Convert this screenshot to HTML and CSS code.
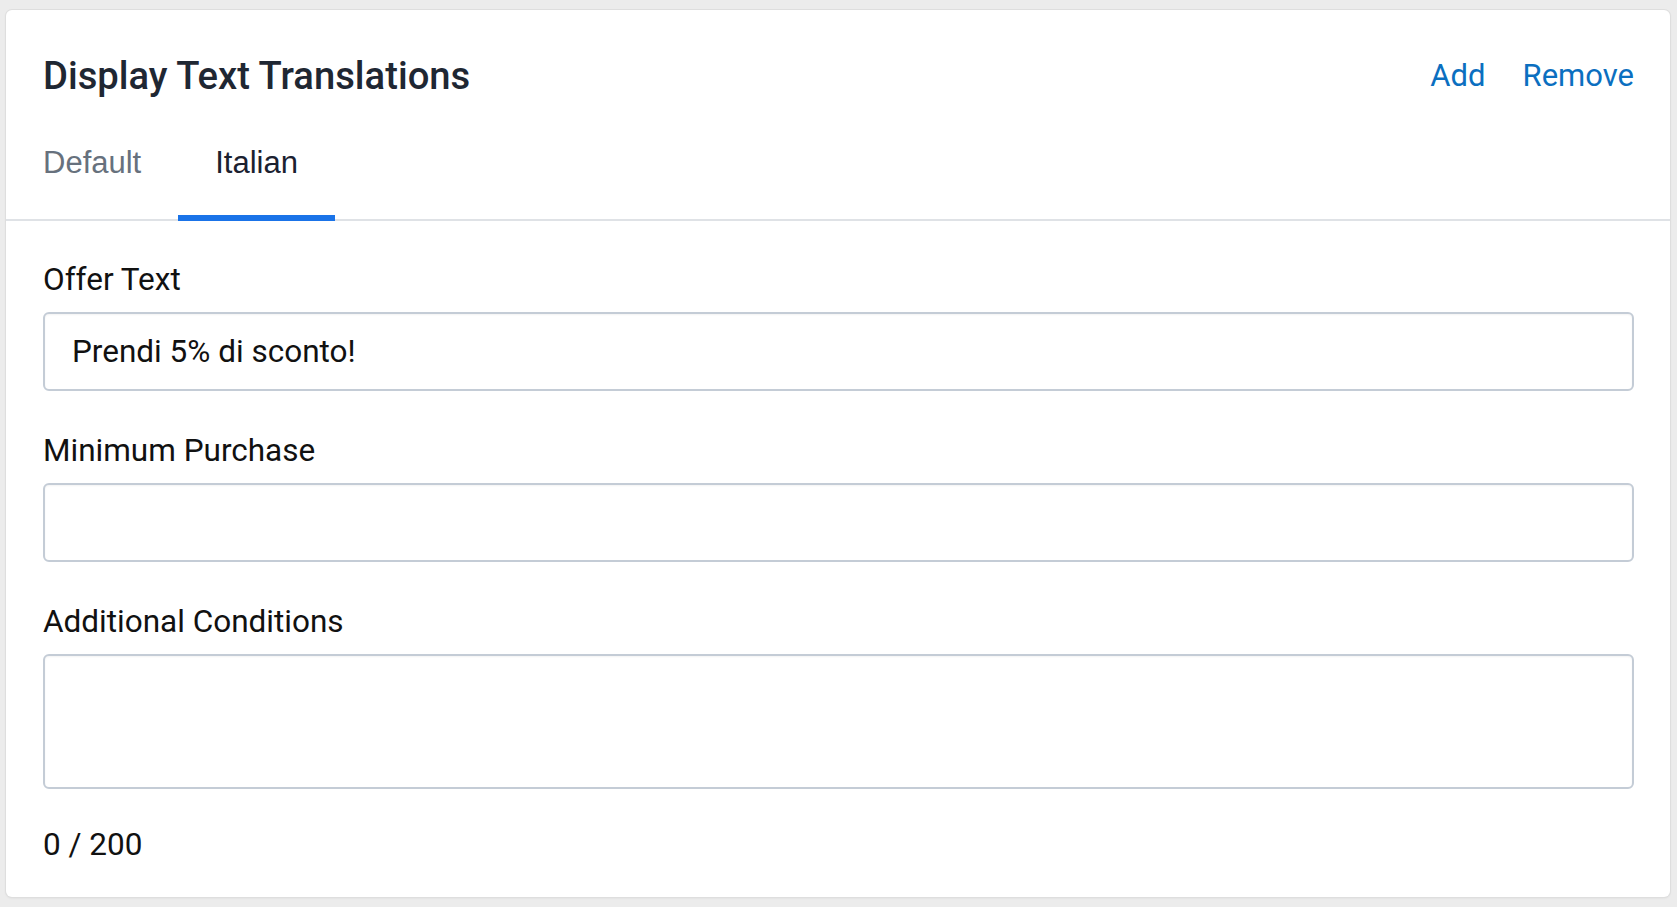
FILE: index.html
```html
<!DOCTYPE html>
<html lang="en">
<head>
<meta charset="utf-8">
<title>Display Text Translations</title>
<link rel="stylesheet" href="styles.css">
</head>
<body>
  <section class="card">
    <header class="card-header">
      <h1 class="card-title">Display Text Translations</h1>
      <div class="actions">
        <a class="action-link" href="#">Add</a>
        <a class="action-link" href="#">Remove</a>
      </div>
    </header>
    <nav class="tabs">
      <div class="tab">Default</div>
      <div class="tab tab-active">Italian</div>
    </nav>
    <div class="card-body">
      <div class="field">
        <label class="field-label">Offer Text</label>
        <div class="text-input">Prendi 5% di sconto!</div>
      </div>
      <div class="field">
        <label class="field-label">Minimum Purchase</label>
        <div class="text-input"></div>
      </div>
      <div class="field field-last">
        <label class="field-label">Additional Conditions</label>
        <div class="text-area"></div>
      </div>
      <div class="counter">0 / 200</div>
    </div>
  </section>
</body>
</html>
```
FILE: styles.css
```css
* {
  box-sizing: border-box;
}

html, body {
  margin: 0;
  height: 100%;
}

body {
  background: #ececec;
  padding: 10px 7px 10px 6px;
  font-family: Roboto, "Liberation Sans", sans-serif;
}

.card {
  background: #ffffff;
  border-radius: 6px;
  box-shadow: 0 0 0 1px #dedede, 0 1px 3px rgba(0, 0, 0, 0.08);
  height: 887px;
}

.card-header {
  display: flex;
  justify-content: space-between;
  align-items: center;
  padding: 43px 36px 0 37px;
}

.card-title {
  margin: 0;
  font-size: 38.2px;
  line-height: 46px;
  font-weight: 500;
  color: #1f2733;
}

.actions {
  display: flex;
  gap: 37px;
}

.action-link {
  font-size: 31px;
  line-height: 46px;
  color: #0b6fc0;
  text-decoration: none;
}

.tabs {
  display: flex;
  margin-top: 44px;
  border-bottom: 2px solid #dfe2e6;
}

.tab {
  font-family: "Liberation Sans", Arial, sans-serif;
  font-size: 31px;
  line-height: 38px;
  padding: 1px 37px 33px;
  border-bottom: 6px solid transparent;
  margin-bottom: -2px;
  color: #67717d;
}

.tab-active {
  color: #1b2130;
  border-bottom-color: #1a73e8;
}

.card-body {
  padding: 41px 36px 36px 37px;
}

.field {
  display: flex;
  flex-direction: column;
  margin-bottom: 42px;
}

.field-last {
  margin-bottom: 0;
}

.field-label {
  font-size: 31.5px;
  line-height: 36px;
  color: #111111;
  margin-bottom: 14px;
}

.text-input,
.text-area {
  border: 2px solid #c4ccd6;
  border-radius: 6px;
  box-shadow: inset 0 1px 2px rgba(0, 0, 0, 0.05);
  font-size: 31.5px;
  color: #111111;
  padding: 0 28px 0 27px;
}

.text-input {
  height: 79px;
  display: flex;
  align-items: center;
}

.text-area {
  height: 135px;
}

.counter {
  margin-top: 38px;
  font-size: 31.5px;
  line-height: 36px;
  color: #111111;
}
```
